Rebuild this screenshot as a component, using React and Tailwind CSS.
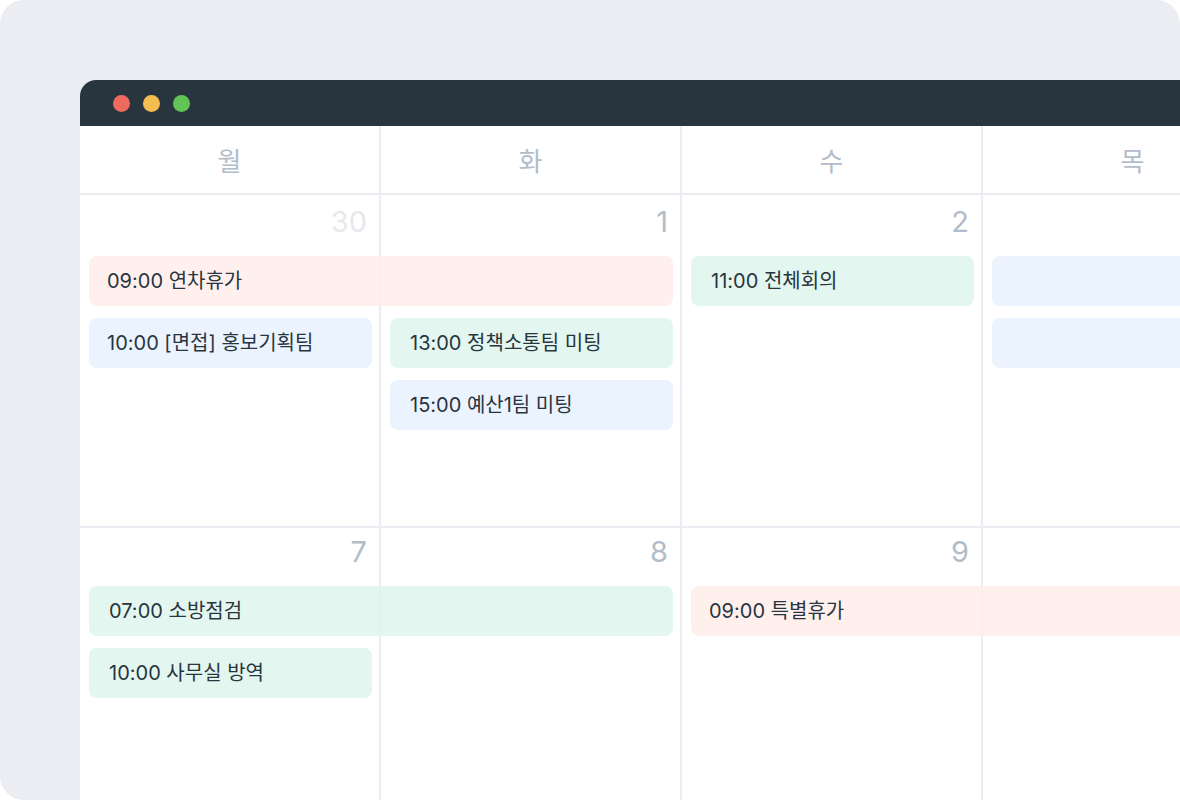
const weekdays = ['월', '화', '수', '목']

const tones = {
  red: 'bg-[#ffedeb]/85',
  green: 'bg-[#def4ec]/85',
  blue: 'bg-[#ebf3ff]',
}

// A null event keeps its slot free, for a bar that runs on from the day before.
const weeks = [
  {
    pad: 'pt-[11px]',
    days: [
      {
        date: '30',
        muted: true,
        events: [
          { tone: 'red', label: '09:00 연차휴가', long: true },
          { tone: 'blue', label: '10:00 [면접] 홍보기획팀' },
        ],
      },
      {
        date: '1',
        events: [
          null,
          { tone: 'green', label: '13:00 정책소통팀 미팅', indent: true },
          { tone: 'blue', label: '15:00 예산1팀 미팅', indent: true },
        ],
      },
      { date: '2', events: [{ tone: 'green', label: '11:00 전체회의', indent: true }] },
      { date: '', events: [{ tone: 'blue', label: '' }, { tone: 'blue', label: '' }] },
    ],
  },
  {
    pad: 'pt-2',
    days: [
      {
        date: '7',
        events: [
          { tone: 'green', label: '07:00 소방점검', long: true, indent: true },
          { tone: 'green', label: '10:00 사무실 방역', indent: true },
        ],
      },
      { date: '8', events: [] },
      { date: '9', events: [{ tone: 'red', label: '09:00 특별휴가', long: true }] },
      { date: '', events: [] },
    ],
  },
]

function TitleBar() {
  return (
    <div className="flex h-[46px] items-center gap-[13px] bg-[#28353e] pl-[33px]">
      <span className="size-[17px] rounded-full bg-[#ee6a5f]" />
      <span className="size-[17px] rounded-full bg-[#f5bd4f]" />
      <span className="size-[17px] rounded-full bg-[#61c455]" />
    </div>
  )
}

function Event({ event }) {
  if (!event) return <li className="h-[50px]" />
  const width = event.long ? 'w-[calc(200%+18px)]' : 'w-full'
  const indent = event.indent ? 'pl-5' : 'pl-[18px]'
  return (
    <li
      className={`flex h-[50px] items-center rounded-lg text-xl whitespace-nowrap text-[#28353e] ${tones[event.tone]} ${width} ${indent}`}
    >
      {event.label}
    </li>
  )
}

function Day({ day, pad }) {
  return (
    <td className={`h-[333px] border-r-2 border-b-2 border-[#ecedf2] pr-[7px] pl-[9px] align-top ${pad}`}>
      <div
        className={`h-8 pr-[5px] text-right text-[29px] leading-8 ${day.muted ? 'text-[#e7e8ec]' : 'text-[#b3bcc9]'}`}
      >
        {day.date}
      </div>
      <ul className="mt-[18px] flex flex-col gap-3">
        {day.events.map((event, i) => (
          <Event key={i} event={event} />
        ))}
      </ul>
    </td>
  )
}

export default function App() {
  return (
    <div className="h-screen bg-white font-['Inter','Noto_Sans_CJK_KR',sans-serif]">
      <main className="h-full overflow-hidden rounded-l-3xl rounded-tr-3xl bg-[#ecedf2] pt-20 pl-20">
        <div className="h-full overflow-hidden rounded-tl-2xl bg-white">
          <TitleBar />
          {/* The last column runs past the edge of the window */}
          <div className="-mr-26">
            <table className="w-full table-fixed border-separate border-spacing-0">
              <thead>
                <tr>
                  {weekdays.map((name) => (
                    <th
                      key={name}
                      scope="col"
                      className="h-[69px] border-r-2 border-b-2 border-[#ecedf2] p-0 pt-1 text-center text-[26px] leading-8 font-normal text-[#b3bcc9]"
                    >
                      {name}
                    </th>
                  ))}
                </tr>
              </thead>
              <tbody>
                {weeks.map((week, i) => (
                  <tr key={i}>
                    {week.days.map((day, j) => (
                      <Day key={j} day={day} pad={week.pad} />
                    ))}
                  </tr>
                ))}
              </tbody>
            </table>
          </div>
        </div>
      </main>
    </div>
  )
}
